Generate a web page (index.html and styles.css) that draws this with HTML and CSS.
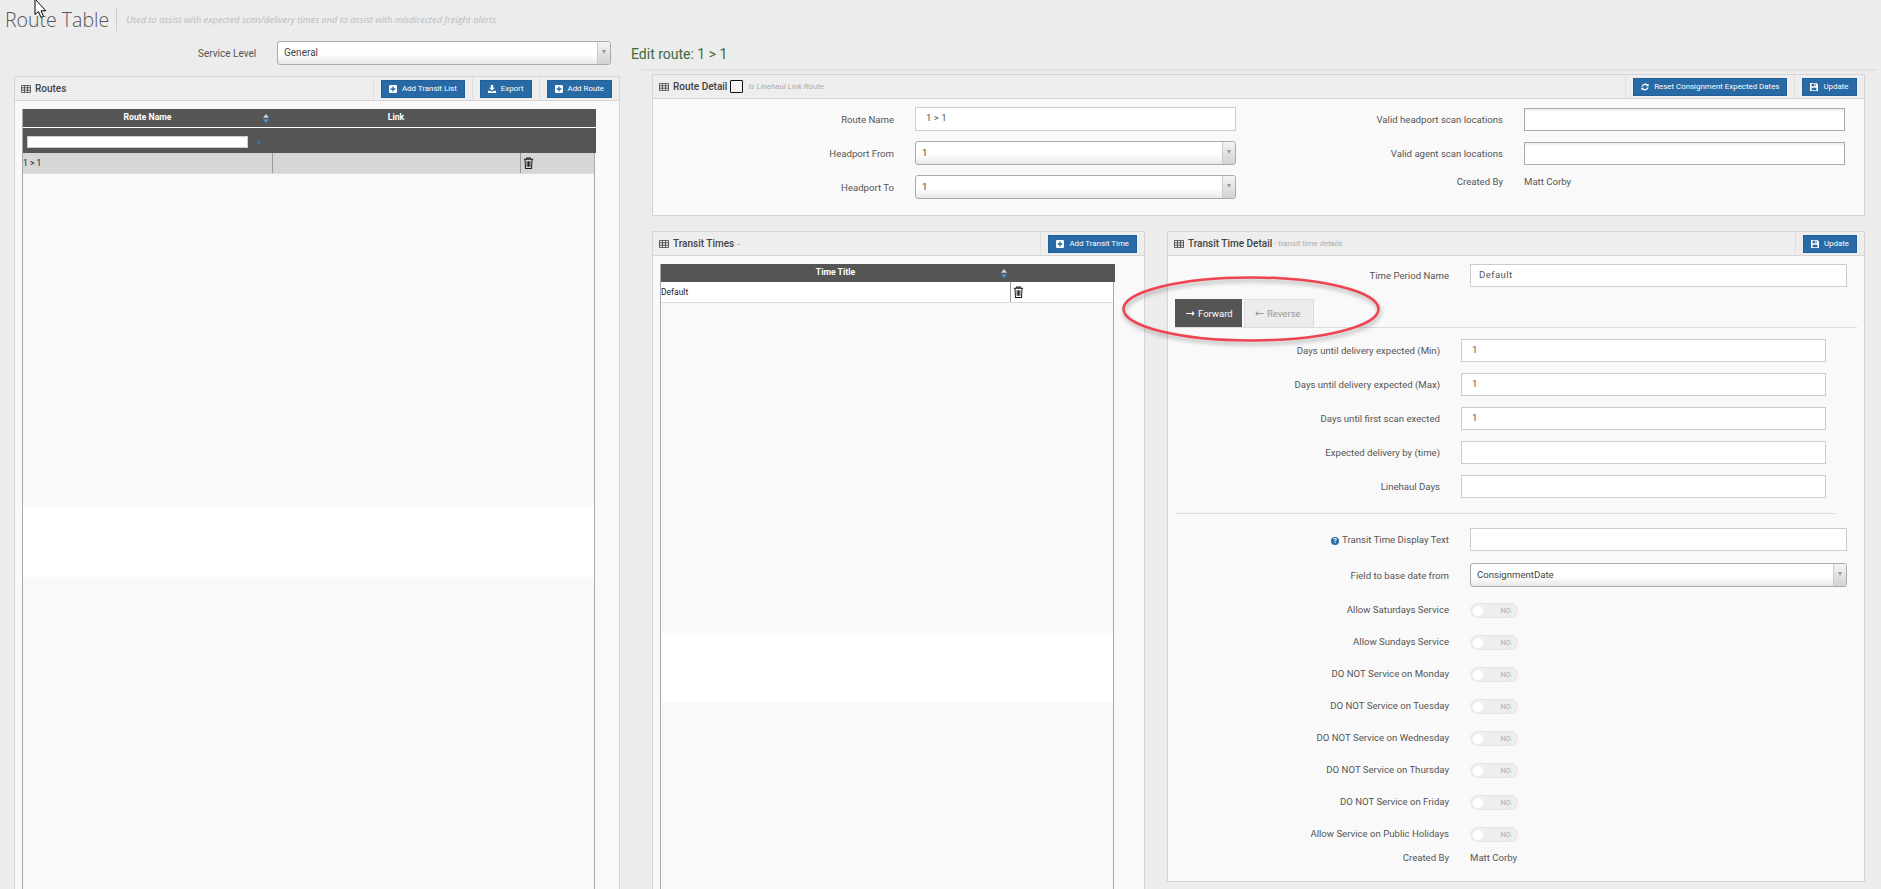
FILE: index.html
```html
<!DOCTYPE html>
<html lang="en">
<head>
<meta charset="utf-8">
<title>Route Table</title>
<link rel="stylesheet" href="styles.css">
</head>
<body>
<svg class="sprite" width="0" height="0" aria-hidden="true">
  <symbol id="i-table" viewBox="0 0 11 10" preserveAspectRatio="none"><path fill="none" stroke="currentColor" d="M.5.5h10v9H.5zM.5 3.5h10M.5 6.5h10M3.8 .5v9M7.2 .5v9"/></symbol>
  <symbol id="i-plus" viewBox="0 0 10 10"><rect width="10" height="10" rx="1.5" fill="currentColor"/><path d="M5 2v6M2 5h6" stroke="#286aa6" stroke-width="1.6"/></symbol>
  <symbol id="i-down" viewBox="0 0 10 10"><path fill="currentColor" d="M3.5 0h3v3.500h2L5 7 1.500 3.500h2zM0 7.200h2.500L5 8.500l2.500-1.300H10V10H0z"/></symbol>
  <symbol id="i-sync" viewBox="0 0 10 10"><path fill="none" stroke="currentColor" stroke-width="1.700" d="M1.300 4.500A3.800 3.800 0 0 1 8 3M8.700 5.500A3.800 3.800 0 0 1 2 7"/><path fill="currentColor" d="M9.500 .5v3.500H6zM.5 9.500V6H4z"/></symbol>
  <symbol id="i-save" viewBox="0 0 10 10"><path fill="currentColor" d="M0 0h8l2 2v8H0z"/><path fill="#286aa6" d="M2 1h5v3H2zM2 6h6v3H2z"/><path fill="currentColor" d="M5 1.500h1.200v2H5z"/></symbol>
  <symbol id="i-trash" viewBox="0 0 11 13"><path fill="none" stroke="currentColor" stroke-width="1.100" d="M.5 2.500h10M3.500 2.500V1h4v1.500M1.700 2.500l.5 10h6.600l.5-10M4 4.500v6M5.500 4.500v6M7 4.500v6"/></symbol>
  <symbol id="i-sort" viewBox="0 0 6 9"><path fill="#c9d6e2" d="M3 0l3 3.700H0z"/><path fill="#4f93d3" d="M3 9L0 5.300h6z"/></symbol>
  <symbol id="i-right" viewBox="0 0 10 6"><path fill="currentColor" d="M0 2.300h7V0l3 3-3 3V3.700H0z"/></symbol>
  <symbol id="i-left" viewBox="0 0 10 6"><path fill="currentColor" d="M10 2.300H3V0L0 3l3 3V3.700h7z"/></symbol>
</svg>

<header class="page-head">
  <h1 class="page-title">Route Table</h1>
  <p class="page-sub">Used to assist with expected scan/delivery times and to assist with misdirected freight alerts</p>
</header>

<main class="cols">
  <section class="col-left">
    <div class="service-row">
      <span class="label service-label">Service Level</span>
      <div class="select service-select"><span>General</span><i class="select-handle"></i></div>
    </div>

    <div class="panel routes-panel">
      <div class="panel-head">
        <div class="panel-title"><svg class="ico-table"><use href="#i-table"/></svg><b>Routes</b></div>
        <div class="panel-action"><a class="btn"><svg><use href="#i-plus"/></svg>Add Transit List</a></div>
        <div class="panel-action"><a class="btn"><svg><use href="#i-down"/></svg>Export</a></div>
        <div class="panel-action"><a class="btn"><svg><use href="#i-plus"/></svg>Add Route</a></div>
      </div>
      <div class="panel-body table-wrap">
        <div class="tbl tbl-routes">
          <div class="tbl-head">
            <div class="th">Route Name<svg class="sort"><use href="#i-sort"/></svg></div>
            <div class="th">Link</div>
            <div class="th"></div>
          </div>
          <div class="tbl-filter">
            <div class="filter-input"></div><span class="filter-x">x</span>
          </div>
          <div class="tr tr-selected">
            <div class="td">1 &gt; 1</div>
            <div class="td"></div>
            <div class="td"><svg class="trash"><use href="#i-trash"/></svg></div>
          </div>
          <div class="band band-routes"></div>
        </div>
      </div>
    </div>
  </section>

  <section class="col-right">
    <h2 class="edit-title">Edit route: 1 &gt; 1</h2>

    <div class="panel detail-panel">
      <div class="panel-head">
        <div class="panel-title"><svg class="ico-table"><use href="#i-table"/></svg><b>Route Detail</b><i class="check"></i><em>Is Linehaul Link Route</em></div>
        <div class="panel-action"><a class="btn"><svg><use href="#i-sync"/></svg>Reset Consignment Expected Dates</a></div>
        <div class="panel-action"><a class="btn"><svg><use href="#i-save"/></svg>Update</a></div>
      </div>
      <div class="panel-body detail-grid">
        <div class="form-col form-col-a">
          <div class="field"><span class="label">Route Name</span><div class="input input-light indent">1 &gt; 1</div></div>
          <div class="field"><span class="label">Headport From</span><div class="select"><span>1</span><i class="select-handle"></i></div></div>
          <div class="field"><span class="label">Headport To</span><div class="select"><span>1</span><i class="select-handle"></i></div></div>
        </div>
        <div class="form-col form-col-b">
          <div class="field"><span class="label">Valid headport scan locations</span><div class="input input-dark"></div></div>
          <div class="field"><span class="label">Valid agent scan locations</span><div class="input input-dark"></div></div>
          <div class="field field-static"><span class="label">Created By</span><span class="value">Matt Corby</span></div>
        </div>
      </div>
    </div>

    <div class="lower">
      <div class="panel times-panel">
        <div class="panel-head">
          <div class="panel-title"><svg class="ico-table"><use href="#i-table"/></svg><b>Transit Times</b><span class="dash">-</span></div>
          <div class="panel-action"><a class="btn"><svg><use href="#i-plus"/></svg>Add Transit Time</a></div>
        </div>
        <div class="panel-body table-wrap">
          <div class="tbl tbl-times">
            <div class="tbl-head">
              <div class="th">Time Title<svg class="sort"><use href="#i-sort"/></svg></div>
              <div class="th"></div>
            </div>
            <div class="tr tr-plain">
              <div class="td">Default</div>
              <div class="td"><svg class="trash"><use href="#i-trash"/></svg></div>
            </div>
            <div class="band band-times"></div>
          </div>
        </div>
      </div>

      <div class="panel time-detail">
        <div class="panel-head">
          <div class="panel-title"><svg class="ico-table"><use href="#i-table"/></svg><b>Transit Time Detail</b><em>- transit time details</em></div>
          <div class="panel-action"><a class="btn"><svg><use href="#i-save"/></svg>Update</a></div>
        </div>
        <div class="panel-body time-body">
          <div class="field wide"><span class="label">Time Period Name</span><div class="input input-light period-input">Default</div></div>

          <div class="tabs">
            <a class="tab tab-active"><svg><use href="#i-right"/></svg>Forward</a>
            <a class="tab tab-idle"><svg><use href="#i-left"/></svg>Reverse</a>
          </div>

          <div class="tab-fields">
            <div class="field"><span class="label">Days until delivery expected (Min)</span><div class="input input-light indent">1</div></div>
            <div class="field"><span class="label">Days until delivery expected (Max)</span><div class="input input-light indent">1</div></div>
            <div class="field"><span class="label">Days until first scan exected</span><div class="input input-light indent">1</div></div>
            <div class="field"><span class="label">Expected delivery by (time)</span><div class="input input-light"></div></div>
            <div class="field"><span class="label">Linehaul Days</span><div class="input input-light"></div></div>
          </div>

          <hr class="rule">

          <div class="field wide"><span class="label"><i class="help">?</i>Transit Time Display Text</span><div class="input input-light"></div></div>
          <div class="field wide field-select"><span class="label">Field to base date from</span><div class="select"><span>ConsignmentDate</span><i class="select-handle"></i></div></div>

          <div class="toggles">
            <div class="field wide toggle-row"><span class="label">Allow Saturdays Service</span><div class="toggle"><i></i><span>NO</span></div></div>
            <div class="field wide toggle-row"><span class="label">Allow Sundays Service</span><div class="toggle"><i></i><span>NO</span></div></div>
            <div class="field wide toggle-row"><span class="label">DO NOT Service on Monday</span><div class="toggle"><i></i><span>NO</span></div></div>
            <div class="field wide toggle-row"><span class="label">DO NOT Service on Tuesday</span><div class="toggle"><i></i><span>NO</span></div></div>
            <div class="field wide toggle-row"><span class="label">DO NOT Service on Wednesday</span><div class="toggle"><i></i><span>NO</span></div></div>
            <div class="field wide toggle-row"><span class="label">DO NOT Service on Thursday</span><div class="toggle"><i></i><span>NO</span></div></div>
            <div class="field wide toggle-row"><span class="label">DO NOT Service on Friday</span><div class="toggle"><i></i><span>NO</span></div></div>
            <div class="field wide toggle-row"><span class="label">Allow Service on Public Holidays</span><div class="toggle"><i></i><span>NO</span></div></div>
          </div>

          <div class="field wide field-created"><span class="label">Created By</span><span class="value">Matt Corby</span></div>
        </div>
      </div>
    </div>
  </section>
</main>

<svg class="annotation" viewBox="0 0 270 76" aria-hidden="true"><ellipse cx="132" cy="36" rx="127.500" ry="31.500"/></svg>
<svg class="cursor" viewBox="0 0 14 20" aria-hidden="true"><path d="M1 -1V14.500L4.500 11.500L7 17.500L9.500 16.300L7 10.800H11.800Z"/></svg>
</body>
</html>
```

FILE: styles.css
```css
* { box-sizing: border-box; }
html, body { margin: 0; height: 889px; overflow: hidden; }
body {
  position: relative;
  background: #ececec;
  color: #555;
  font-family: Roboto, "Liberation Sans", sans-serif;
  font-size: 9.600px;
  line-height: 12px;
}
.sprite { position: absolute; }

/* page header */
.page-head { display: flex; align-items: center; height: 36px; padding: 3px 0 0 5px; }
.page-title {
  margin: 0;
  padding-right: 7px;
  height: 23px;
  border-right: 1px solid #ccc;
  font-family: "Open Sans", sans-serif;
  font-size: 19.500px;
  font-weight: 300;
  line-height: 23px;
  color: #555;
  white-space: nowrap;
}
.page-sub { margin: 0 0 0 9px; font-family: "Open Sans", "Liberation Sans", sans-serif; font-size: 9.200px; font-style: italic; color: #bbb; white-space: nowrap; }

.cols { display: flex; }
.col-left { width: 641px; flex: none; }
.col-right { width: 1229px; flex: none; padding: 0 5.5px 0 11px; }

/* service level */
.service-row { display: flex; align-items: center; padding: 5px 0 0 198px; font-size: 10px; }
.service-label { width: 58px; margin-right: 21px; }
.service-select { width: 334px; }

/* panels */
.panel { background: #f9f9f9; border: 1px solid #d5d5d5; }
.panel-head {
  display: flex;
  height: 24px;
  background: #eee;
  border-bottom: 1px solid #d5d5d5;
}
.panel-title { flex: 1; display: flex; align-items: center; padding-left: 6px; white-space: nowrap; }
.panel-title b { font-weight: 500; color: #444; font-size: 10px; }
.panel-title em { margin-left: 2px; font-size: 8px; color: #aaa; }
.ico-table { width: 10px; height: 8px; margin-right: 4px; color: #444; flex: none; }
.check { width: 13px; height: 13px; margin: 0 3px; border: 1px solid #111; border-radius: 1px; background: #f4f4f4; flex: none; }
.dash { margin-left: 3px; color: #888; }
.panel-action { display: flex; align-items: center; padding: 0 7px; border-left: 1px solid #e0e0e0; }
.btn {
  display: flex;
  align-items: center;
  height: 18px;
  padding: 0 7px;
  background: #286aa6;
  border: 1px solid #23609a;
  color: #fff;
  font-size: 7.900px;
  white-space: nowrap;
}
.btn svg { width: 8px; height: 8px; margin-right: 5px; color: #fff; flex: none; }

.routes-panel { width: 606px; height: 820px; margin: 11px 0 0 14px; }

/* tables */
.table-wrap { padding: 8px 0 0 7px; }
.tbl { border-left: 1px solid #aaa; border-right: 1px solid #aaa; height: 1000px; }
.tbl-routes { width: 573px; }
.tbl-times { width: 454px; }
.tbl-head { display: grid; height: 18px; margin-right: -2px; background: #555; }
.tbl-routes .tbl-head, .tbl-routes .tr { grid-template-columns: 249px 248px 1fr; }
.tbl-times .tbl-head, .tbl-times .tr { grid-template-columns: 349px 1fr; }
.th { position: relative; text-align: center; color: #fff; font-size: 8.700px; font-weight: 700; line-height: 16px; }
.sort { position: absolute; right: 3px; top: 5px; width: 6px; height: 9px; }
.tbl-filter { display: flex; align-items: center; height: 26px; margin-right: -2px; padding: 2px 0 0 4px; background: #555; border-top: 1px solid #fff; }
.filter-input { width: 221px; height: 12px; background: #fff; border: 1px solid #ccc; }
.filter-x { margin-left: 9px; color: #3a80c0; font-size: 8px; }
.tr { display: grid; height: 21px; border-bottom: 1px solid #ddd; }
.tr-selected { background: #d6d6d6; }
.tr-plain { background: #fff; }
.td { display: flex; align-items: center; font-size: 8.500px; color: #222; white-space: nowrap; }
.td + .td { border-left: 1px solid #999; padding-left: 2px; }
.trash { width: 11px; height: 12px; color: #1a1a1a; }
.band { background: #fff; }
.band-routes { height: 70px; margin-top: 333px; }
.band-times { height: 69px; margin-top: 330px; }

/* forms */
.label { padding-top: 1px; color: #555; text-align: right; white-space: nowrap; }
.value { padding-top: 1px; color: #555; white-space: nowrap; }
.field { display: grid; align-items: center; }
.input { height: 100%; background: #fff; color: #555; padding-left: 3px; line-height: 20px; }
.indent { padding-left: 10px; }
.period-input { padding-left: 8px; letter-spacing: .4px; }
.input-light { border: 1px solid #ccc; }
.input-dark { border: 1px solid #aaa; box-shadow: inset 0 2px 2px #eee; }
.select {
  display: flex;
  height: 100%;
  min-height: 24px;
  background: linear-gradient(#fff 55%, #e8e8e8);
  border: 1px solid #aaa;
  border-radius: 3px;
  color: #444;
  line-height: 22px;
}
.select span { flex: 1; padding-left: 6px; }
.select-handle {
  position: relative;
  width: 13px;
  flex: none;
  background: linear-gradient(#f4f4f4, #d2d2d2);
  border-left: 1px solid #ccc;
  border-radius: 0 2px 2px 0;
}
.select-handle::after {
  content: "";
  position: absolute;
  left: 4px;
  top: 8px;
  border: 2.500px solid transparent;
  border-top: 4px solid #999;
  border-bottom: 0;
}

.detail-panel { height: 142px; margin-top: 4px; }
.detail-grid { display: flex; padding-top: 8px; }
.form-col { display: flex; flex-direction: column; gap: 10px; }
.form-col .field { height: 24px; column-gap: 21px; }
.form-col-a .field { grid-template-columns: 241px 321px; }
.form-col-a { width: 584px; }
.form-col-b { width: 587px; }
.form-col-b .field { grid-template-columns: 266px 321px; }
.form-col-b .input { height: 23px; }
.form-col-b .field-static { align-items: start; }

.edit-title {
  margin: 0 -5px 0 -21px;
  height: 34px;
  padding-top: 11px;
  font-size: 14px;
  font-weight: 400;
  line-height: 14px;
  color: #3d6b3d;
}
.edit-title::after {
  content: "";
  display: block;
  height: 2px;
  margin: 8px -6px 0 10px;
  background: #e2e2e2;
}

.lower { display: flex; align-items: flex-start; gap: 22px; margin-top: 15px; }
.times-panel { width: 493px; height: 900px; flex: none; }
.time-detail { width: 698px; flex: none; }
.time-body { padding: 8px 0 18px 0; }
.field.wide { grid-template-columns: 281px 377px; column-gap: 21px; height: 23px; }
.tabs { display: flex; gap: 2px; height: 29px; margin: 12px 7px 0 7px; border-bottom: 1px solid #ddd; }
.tab {
  display: flex;
  align-items: center;
  height: 28px;
  padding-left: 10px;
  background: #ececec;
  border: 1px solid #ddd;
  border-bottom: 0;
  color: #999;
  font-size: 9.500px;
}
.tab svg { width: 9px; height: 5px; margin-right: 3px; }
.tab-active { width: 67px; background: #555; border-color: #555; color: #fff; }
.tab-idle { width: 70px; }
.tab-fields { display: flex; flex-direction: column; gap: 11px; margin-top: 11px; }
.tab-fields .field { grid-template-columns: 272px 365px; column-gap: 21px; height: 23px; }
.rule { height: 1px; margin: 15px 28px 14px 7px; border: 0; background: #ddd; }
.field-select { margin-top: 12px; }
.help {
  display: inline-block;
  width: 8px;
  height: 8px;
  margin-right: 3px;
  border-radius: 50%;
  background: #2a6ca8;
  color: #fff;
  font-size: 7px;
  font-style: normal;
  font-weight: 700;
  line-height: 8px;
  text-align: center;
}
.toggles { display: flex; flex-direction: column; gap: 17px; margin-top: 17px; }
.field.toggle-row { height: 15px; }
.toggle-row .label { padding: 0 0 2px; }
.toggle {
  display: flex;
  align-items: center;
  justify-content: space-between;
  width: 48px;
  height: 15px;
  padding: 0 6px 0 2px;
  background: #eee;
  border: 1px solid #e6e6e6;
  border-radius: 8px;
}
.toggle i { width: 10px; height: 10px; border-radius: 50%; background: #fff; }
.toggle span { font-size: 7.500px; color: #aaa; }
.field.field-created { height: 12px; margin-top: 9px; }

/* overlays: hand-drawn annotation and captured mouse pointer */
.annotation {
  position: absolute;
  left: 1119px;
  top: 273px;
  width: 270px;
  height: 76px;
  overflow: visible;
  filter: drop-shadow(1px 3px 2px rgba(0, 0, 0, .3));
}
.annotation ellipse { fill: none; stroke: #ef4350; stroke-width: 2.500; }
.cursor { position: absolute; left: 34px; top: 0; width: 14px; height: 20px; overflow: hidden; }
.cursor path { fill: #fff; stroke: #000; stroke-width: 1; }
```
